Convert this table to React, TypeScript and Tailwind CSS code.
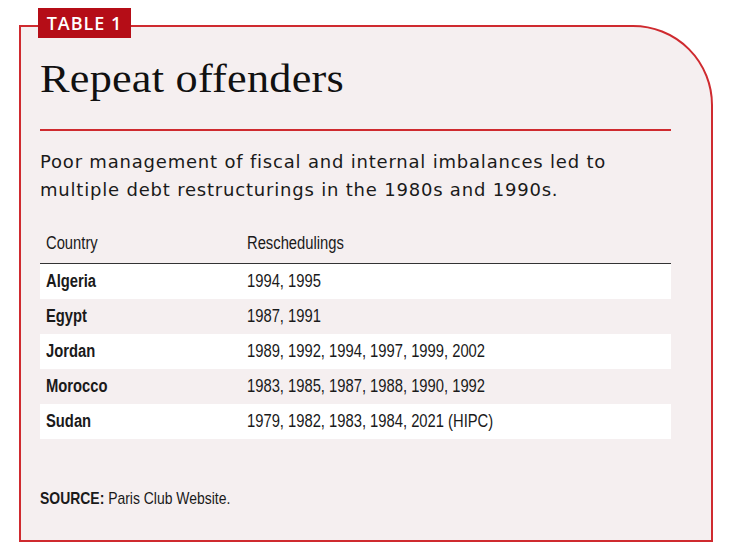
import React from "react";

const rows = [
  ["Algeria", "1994, 1995"],
  ["Egypt", "1987, 1991"],
  ["Jordan", "1989, 1992, 1994, 1997, 1999, 2002"],
  ["Morocco", "1983, 1985, 1987, 1988, 1990, 1992"],
  ["Sudan", "1979, 1982, 1983, 1984, 2021 (HIPC)"],
];

const cond =
  "inline-block origin-left scale-x-[0.82] whitespace-nowrap font-['Liberation_Sans',Arial,sans-serif]";

export default function App() {
  return (
    <div className="w-[733px] h-[554px] bg-white relative">
      <div className="absolute left-[19px] top-[25px] w-[694px] h-[517px] border-2 border-[#cf2a2f] rounded-tr-[80px] bg-[#f5eff0]">
        <div className="pl-[19px] pr-[40px] pt-[28px] flex flex-col">
          <h1 className="font-['Liberation_Serif',serif] text-[39px] leading-[48px] tracking-[0.2px] text-[#111]">
            <span className="inline-block origin-left scale-x-[1.135] whitespace-nowrap">
              Repeat offenders
            </span>
          </h1>
          <div className="mt-[26px] h-[1.5px] bg-[#cf2a2f]" />
          <p className="mt-[17px] font-['DejaVu_Sans',sans-serif] text-[18px] leading-[28px] tracking-[0.8px] text-[#1a1a1a] whitespace-nowrap">
            Poor management of fiscal and internal imbalances led to
            <br />
            multiple debt restructurings in the 1980s and 1990s.
          </p>
          <div className="mt-[26px] text-[18px] text-[#1a1a1a]">
            <div className="flex h-[34px] items-center pb-[6px] border-b-[1.5px] border-[#333]">
              <div className="w-[207px] pl-[6px]">
                <span className={cond}>Country</span>
              </div>
              <div>
                <span className={cond}>Reschedulings</span>
              </div>
            </div>
            {rows.map(([c, y], i) => (
              <div
                key={c}
                className={`flex h-[35px] items-center ${i % 2 === 0 ? "bg-white" : ""}`}
              >
                <div className="w-[207px] pl-[6px]">
                  <span className={`${cond} font-bold`}>{c}</span>
                </div>
                <div>
                  <span className={cond}>{y}</span>
                </div>
              </div>
            ))}
          </div>
          <div className="mt-[46px] text-[17px] text-[#1a1a1a]">
            <span className={cond}>
              <span className="font-bold">SOURCE:</span> Paris Club Website.
            </span>
          </div>
        </div>
      </div>
      <div className="absolute left-[38px] top-[8px] w-[93px] h-[30px] bg-[#b50d17] flex items-center justify-center">
        <span className="font-['Open_Sans',sans-serif] font-semibold text-[18px] tracking-[1px] text-white leading-none">
          TABLE 1
        </span>
      </div>
    </div>
  );
}
